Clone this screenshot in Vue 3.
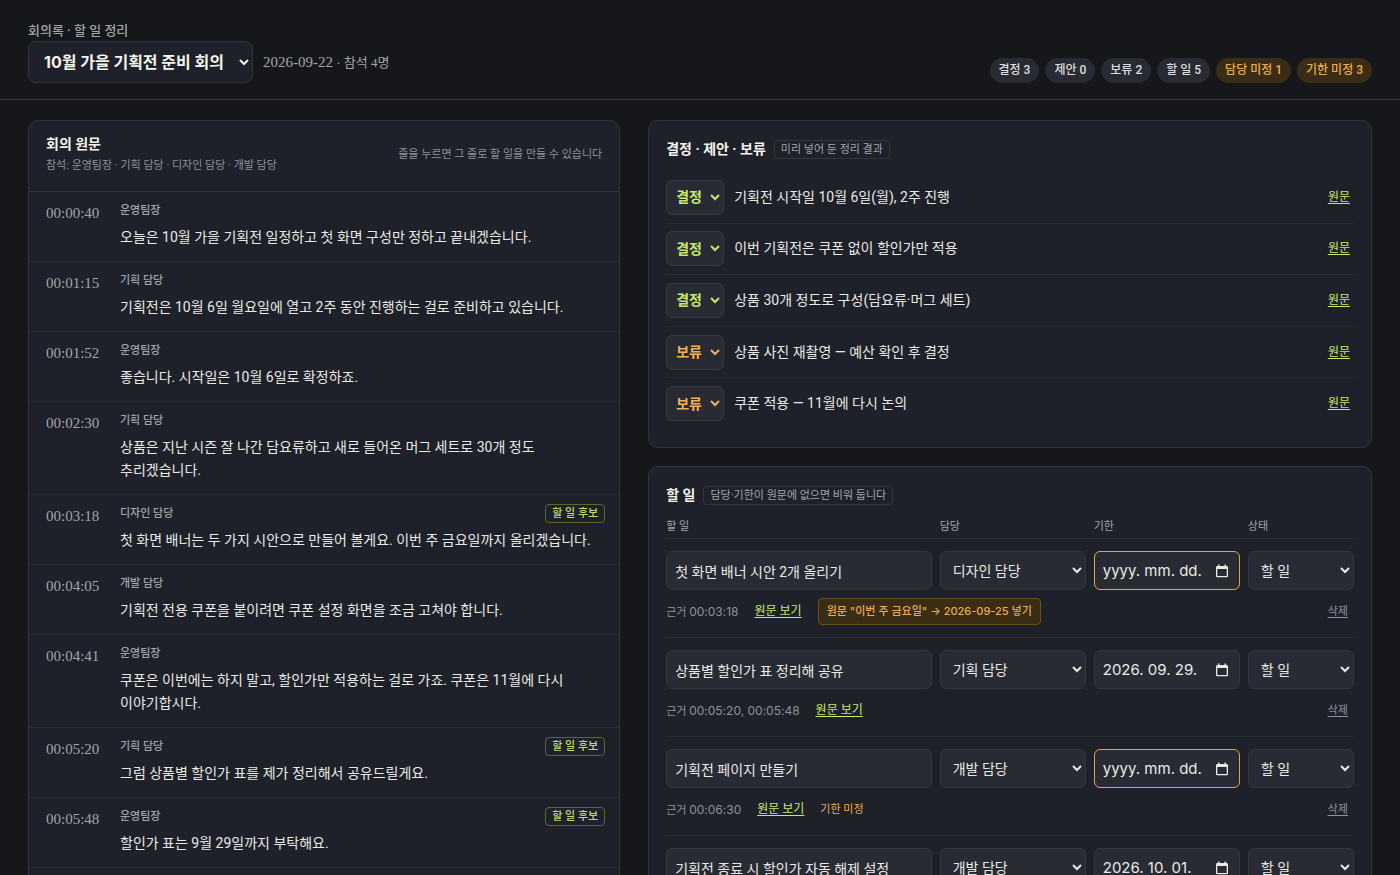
<script setup>
import { ref } from 'vue'

const meeting = ref('10월 가을 기획전 준비 회의')

const counts = [
  { label: '결정 3' },
  { label: '제안 0' },
  { label: '보류 2' },
  { label: '할 일 5' },
  { label: '담당 미정 1', warn: true },
  { label: '기한 미정 3', warn: true },
]

const lines = [
  { time: '00:00:40', who: '운영팀장', text: '오늘은 10월 가을 기획전 일정하고 첫 화면 구성만 정하고 끝내겠습니다.' },
  { time: '00:01:15', who: '기획 담당', text: '기획전은 10월 6일 월요일에 열고 2주 동안 진행하는 걸로 준비하고 있습니다.' },
  { time: '00:01:52', who: '운영팀장', text: '좋습니다. 시작일은 10월 6일로 확정하죠.' },
  { time: '00:02:30', who: '기획 담당', text: '상품은 지난 시즌 잘 나간 담요류하고 새로 들어온 머그 세트로 30개 정도 추리겠습니다.' },
  { time: '00:03:18', who: '디자인 담당', text: '첫 화면 배너는 두 가지 시안으로 만들어 볼게요. 이번 주 금요일까지 올리겠습니다.', candidate: true },
  { time: '00:04:05', who: '개발 담당', text: '기획전 전용 쿠폰을 붙이려면 쿠폰 설정 화면을 조금 고쳐야 합니다.' },
  { time: '00:04:41', who: '운영팀장', text: '쿠폰은 이번에는 하지 말고, 할인가만 적용하는 걸로 가죠. 쿠폰은 11월에 다시 이야기합시다.' },
  { time: '00:05:20', who: '기획 담당', text: '그럼 상품별 할인가 표를 제가 정리해서 공유드릴게요.', candidate: true },
  { time: '00:05:48', who: '운영팀장', text: '할인가 표는 9월 29일까지 부탁해요.', candidate: true },
]

const decisions = ref([
  { kind: '결정', text: '기획전 시작일 10월 6일(월), 2주 진행' },
  { kind: '결정', text: '이번 기획전은 쿠폰 없이 할인가만 적용' },
  { kind: '결정', text: '상품 30개 정도로 구성(담요류·머그 세트)' },
  { kind: '보류', text: '상품 사진 재촬영 — 예산 확인 후 결정' },
  { kind: '보류', text: '쿠폰 적용 — 11월에 다시 논의' },
])

const tasks = ref([
  { title: '첫 화면 배너 시안 2개 올리기', who: '디자인 담당', due: '', state: '할 일', source: '00:03:18', suggest: '원문 "이번 주 금요일" → 2026-09-25 넣기' },
  { title: '상품별 할인가 표 정리해 공유', who: '기획 담당', due: '2026. 09. 29.', state: '할 일', source: '00:05:20, 00:05:48' },
  { title: '기획전 페이지 만들기', who: '개발 담당', due: '', state: '할 일', source: '00:06:30', note: '기한 미정' },
  { title: '기획전 종료 시 할인가 자동 해제 설정', who: '개발 담당', due: '2026. 10. 01.', state: '할 일', source: '' },
])

const people = ['담당 미정', '운영팀장', '기획 담당', '디자인 담당', '개발 담당']
</script>

<template>
  <div class="page">
    <header class="top">
      <div>
        <label class="eyebrow" for="meeting">회의록 · 할 일 정리</label>
        <div class="pick">
          <select id="meeting" v-model="meeting" class="meeting">
            <option>10월 가을 기획전 준비 회의</option>
          </select>
          <span class="when"><time>2026-09-22</time> · 참석 4명</span>
        </div>
      </div>
      <ul class="counts">
        <li v-for="c in counts" :key="c.label" class="count" :class="{ warn: c.warn }">{{ c.label }}</li>
      </ul>
    </header>

    <main class="columns">
      <section class="panel">
        <div class="source-head">
          <div>
            <h2>회의 원문</h2>
            <p class="hint">참석: 운영팀장 · 기획 담당 · 디자인 담당 · 개발 담당</p>
          </div>
          <p class="hint">줄을 누르면 그 줄로 할 일을 만들 수 있습니다</p>
        </div>
        <ol class="lines">
          <li v-for="l in lines" :key="l.time" class="line">
            <time class="time">{{ l.time }}</time>
            <div class="said">
              <div class="who">
                <span>{{ l.who }}</span>
                <span v-if="l.candidate" class="candidate">할 일 후보</span>
              </div>
              <p>{{ l.text }}</p>
            </div>
          </li>
        </ol>
      </section>

      <div class="side">
        <section class="panel padded">
          <div class="title">
            <h2>결정 · 제안 · 보류</h2>
            <span class="tag">미리 넣어 둔 정리 결과</span>
          </div>
          <ul class="decisions">
            <li v-for="d in decisions" :key="d.text" class="decision">
              <select v-model="d.kind" class="kind" :class="{ hold: d.kind === '보류' }" :aria-label="'분류: ' + d.text">
                <option>결정</option>
                <option>제안</option>
                <option>보류</option>
              </select>
              <span class="what">{{ d.text }}</span>
              <a href="#" class="link">원문</a>
            </li>
          </ul>
        </section>

        <section class="panel padded">
          <div class="title">
            <h2>할 일</h2>
            <span class="tag">담당·기한이 원문에 없으면 비워 둡니다</span>
          </div>
          <table class="tasks">
            <thead>
              <tr class="grid head">
                <th scope="col">할 일</th>
                <th scope="col">담당</th>
                <th scope="col">기한</th>
                <th scope="col">상태</th>
              </tr>
            </thead>
            <tbody v-for="t in tasks" :key="t.title" class="task">
              <tr class="grid">
                <td><input v-model="t.title" class="field" type="text" aria-label="할 일"></td>
                <td>
                  <select v-model="t.who" class="field" aria-label="담당">
                    <option v-for="p in people" :key="p">{{ p }}</option>
                  </select>
                </td>
                <td>
                  <div class="field date" :class="{ empty: !t.due }">
                    <input v-model="t.due" type="text" placeholder="yyyy. mm. dd." aria-label="기한">
                    <button type="button" aria-label="달력 열기">
                      <svg viewBox="0 0 14 14" width="14" height="14" aria-hidden="true">
                        <path d="M3 0.500h1.500v1.500h5V0.500H11v1.500h1A1.200 1.200 0 0 1 13 3.200v8.800a1.200 1.200 0 0 1-1.200 1.200H2.200A1.200 1.200 0 0 1 1 12V3.200A1.200 1.200 0 0 1 2.200 2H3zM2.300 5v6.900h9.400V5z" fill="currentColor" fill-rule="evenodd" />
                      </svg>
                    </button>
                  </div>
                </td>
                <td>
                  <select v-model="t.state" class="field" aria-label="상태">
                    <option>할 일</option>
                    <option>진행 중</option>
                    <option>완료</option>
                  </select>
                </td>
              </tr>
              <tr v-if="t.source" class="meta">
                <td colspan="4">
                  <span class="basis">근거 <span class="stamp">{{ t.source }}</span></span>
                  <a href="#" class="link">원문 보기</a>
                  <button v-if="t.suggest" type="button" class="suggest">{{ t.suggest }}</button>
                  <span v-if="t.note" class="note">{{ t.note }}</span>
                  <button type="button" class="remove">삭제</button>
                </td>
              </tr>
            </tbody>
          </table>
        </section>
      </div>
    </main>
  </div>
</template>

<style>
html {
  background: #16171b;
  color-scheme: dark;
}
body {
  margin: 0;
  height: 100vh;
  overflow: hidden;
}
</style>

<style scoped>
.page {
  background: #16171b;
  color: #e9e9e4;
  font-family: Roboto, "Noto Sans CJK KR", sans-serif;
  font-size: 14px;
  line-height: 23px;
  word-break: keep-all;
}
.page *,
.page {
  box-sizing: border-box;
}
h2,
p,
ul,
ol {
  margin: 0;
  padding: 0;
  list-style: none;
}
select,
input,
button {
  font: inherit;
  color: inherit;
}
h2 {
  font-size: 14px;
  font-weight: 700;
  color: #f4f3ee;
}
.top {
  display: flex;
  justify-content: space-between;
  align-items: flex-end;
  padding: 20px 28px 16px;
  border-bottom: 1px solid #34363d;
}
.eyebrow {
  display: block;
  font-size: 13px;
  line-height: 21px;
  font-weight: 500;
  color: #a3a5aa;
}
.pick {
  display: flex;
  align-items: center;
  gap: 10px;
}
.meeting {
  height: 42px;
  padding: 0 11px;
  font-family: Inter, "Noto Sans CJK KR", sans-serif;
  font-size: 16px;
  font-weight: 700;
  color: #f4f3ee;
  background: #1e2129;
  border: 1px solid #34363d;
  border-radius: 8px;
}
.when {
  font-family: "Liberation Serif", "Noto Sans CJK KR", serif;
  font-size: 13px;
  color: #a3a5aa;
}
.when time {
  font-size: 15px;
}
.counts {
  display: flex;
  gap: 6px;
}
.count {
  padding: 0 9px;
  font-size: 12px;
  line-height: 25px;
  font-weight: 500;
  color: #dededb;
  background: #282b33;
  border-radius: 13px;
}
.count.warn {
  color: #e8ac58;
  background: #3b2c15;
}
.columns {
  display: grid;
  grid-template-columns: 9fr 11fr;
  gap: 28px;
  padding: 20px 28px;
}
.side {
  display: flex;
  flex-direction: column;
  gap: 18px;
  min-width: 0;
}
.panel {
  min-width: 0;
  background: #1e2129;
  border: 1px solid #31343c;
  border-radius: 10px;
}
.padded {
  padding: 17px;
}
.source-head {
  display: flex;
  justify-content: space-between;
  align-items: center;
  padding: 12px 17px 15px;
  border-bottom: 1px solid #31343c;
}
.hint {
  font-size: 11px;
  line-height: 20px;
  color: #8f9299;
}
.line {
  display: flex;
  padding: 8px 14px 12px 17px;
  border-bottom: 1px solid #262931;
}
.time {
  flex: none;
  width: 74px;
  padding-top: 2px;
  font-family: "Liberation Serif", serif;
  font-size: 15px;
  color: #a3a5aa;
}
.said {
  flex: 1;
  min-width: 0;
}
.who {
  display: flex;
  justify-content: space-between;
  align-items: center;
  height: 20px;
  margin-bottom: 6px;
  font-size: 11px;
  font-weight: 500;
  color: #a3a5aa;
}
.candidate {
  padding: 0 6px;
  line-height: 17px;
  color: #bddd6b;
  border: 1px solid #566a2c;
  border-radius: 4px;
}
.title {
  display: flex;
  align-items: center;
  gap: 8px;
}
.tag {
  padding: 0 6px;
  font-size: 11px;
  line-height: 17px;
  color: #a3a5aa;
  border: 1px solid #34363d;
  border-radius: 4px;
}
.decisions {
  display: grid;
  grid-auto-rows: 1fr;
  min-height: 258px;
  margin-top: 11px;
}
.decision {
  display: flex;
  align-items: center;
  gap: 10px;
  padding: 0 4px 0 0;
  border-bottom: 1px solid #282b33;
}
.decision:last-child {
  border-bottom-color: transparent;
}
.kind {
  height: 35px;
  padding: 0 5px;
  font-size: 14px;
  font-weight: 700;
  color: #c5e86c;
  background: #282b33;
  border: 1px solid #383b43;
  border-radius: 6px;
}
.kind.hold {
  color: #f0b05c;
}
.what {
  flex: 1;
}
.link {
  font-size: 12px;
  color: #c5e86c;
  text-decoration: underline;
  text-underline-offset: 2px;
}
.tasks {
  display: block;
}
.tasks thead,
.tasks tbody {
  display: block;
}
.tasks td,
.tasks th {
  padding: 0;
}
.grid {
  display: grid;
  grid-template-columns: 20fr 11fr 11fr 8fr;
  gap: 8px;
}
.grid > * {
  min-width: 0;
}
.head {
  padding: 10px 0 1px;
  border-bottom: 1px solid #282b33;
}
.head th {
  font-size: 11px;
  line-height: 20px;
  font-weight: 400;
  text-align: left;
  color: #a3a5aa;
}
.task {
  padding: 12px 0;
  border-bottom: 1px solid #282b33;
}
.field {
  display: block;
  width: 100%;
  height: 39px;
  padding: 0 8px;
  color: #e9e9e4;
  background: #282b33;
  border: 1px solid #34363d;
  border-radius: 6px;
}
.date {
  display: flex;
  align-items: center;
  padding: 0 10px 0 8px;
  font-family: Inter, sans-serif;
  font-size: 15px;
}
.date.empty {
  border-color: #dba850;
}
.date input {
  flex: 1;
  width: 0;
  min-width: 0;
  padding: 0;
  background: none;
  border: 0;
  outline: 0;
}
.date input::placeholder {
  color: #e9e9e4;
  opacity: 1;
}
.date button {
  display: flex;
  padding: 0;
  background: none;
  border: 0;
}
.meta {
  display: block;
}
.meta td {
  display: flex;
  align-items: center;
  gap: 16px;
  height: 27px;
  margin-top: 8px;
  padding-right: 6px;
  font-size: 12px;
}
.basis {
  font-size: 11px;
  color: #8f9299;
}
.stamp {
  font-family: Inter, sans-serif;
  font-size: 12px;
}
.suggest {
  height: 27px;
  padding: 0 8px;
  font-family: Inter, "Noto Sans CJK KR", sans-serif;
  font-size: 11px;
  font-weight: 500;
  color: #e8ac58;
  background: #3b2c15;
  border: 1px solid #69501f;
  border-radius: 4px;
}
.note {
  font-size: 11px;
  color: #e8ac58;
}
.remove {
  margin-left: auto;
  padding: 0;
  font-size: 11px;
  color: #8f9299;
  text-decoration: underline;
  text-underline-offset: 2px;
  background: none;
  border: 0;
}
</style>
